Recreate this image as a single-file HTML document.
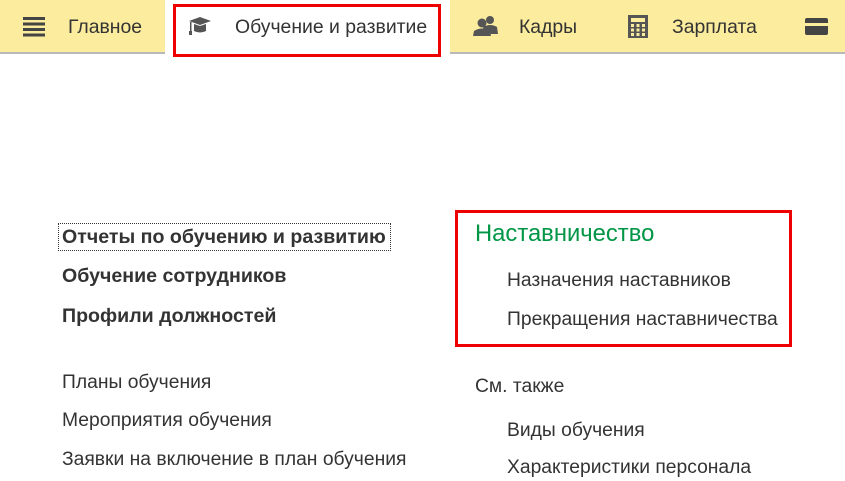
<!DOCTYPE html>
<html><head><meta charset="utf-8"><style>
body{margin:0;width:845px;height:481px;background:#fff;position:relative;overflow:hidden;font-family:"Liberation Sans",Arial,sans-serif;color:#333}
.bar{position:absolute;left:0;top:0;width:845px;height:52px;background:#fbec9e;border-bottom:2px solid #b9b9b9}
.t{position:absolute;top:16px;font-size:19.4px;color:#333;white-space:nowrap}
.a{position:absolute;white-space:nowrap}
.b{font-weight:bold;font-size:19.6px;color:#333}
.r{font-size:19.3px;color:#333}
</style></head><body>
<div class="bar"></div>
<div style="position:absolute;left:165px;top:0;width:285px;height:54px;background:#fff"></div>
<div style="position:absolute;left:173px;top:4px;width:262px;height:47px;border:3px solid #e00"></div>
<svg style="position:absolute;left:23px;top:17px" width="22" height="20"><g fill="#444"><rect x="0" y="0" width="22" height="3"/><rect x="0" y="5.5" width="22" height="3"/><rect x="0" y="11" width="22" height="3"/><rect x="0" y="16.5" width="22" height="3"/></g></svg>
<div class="t" style="left:68px">Главное</div>
<svg style="position:absolute;left:188px;top:16px" width="24" height="22"><g fill="#555"><path d="M1 5 L12 1 L23 5 L12 9 Z"/><path d="M6 8 L12 10 L18 8 L18 15 Q12 18 6 15 Z"/><rect x="2" y="6" width="1.5" height="10"/><rect x="1" y="15" width="3" height="4"/></g></svg>
<div class="t" style="left:235px">Обучение и развитие</div>
<svg style="position:absolute;left:473px;top:15px" width="26" height="22"><g fill="#555"><circle cx="17" cy="5" r="4"/><path d="M10 12 Q17 8 24 12 L25 19 L12 19 Z"/><circle cx="9" cy="8" r="4.5"/><path d="M0 21 L1 16 Q9 11 17 16 L18 21 Z"/></g></svg>
<div class="t" style="left:519px">Кадры</div>
<svg style="position:absolute;left:628px;top:15px" width="20" height="23"><rect x="0" y="0" width="20" height="23" fill="#555"/><rect x="3" y="3" width="14" height="4" fill="#fbec9e"/><g fill="#fbec9e"><rect x="3" y="9" width="3" height="3"/><rect x="8.5" y="9" width="3" height="3"/><rect x="14" y="9" width="3" height="3"/><rect x="3" y="13.5" width="3" height="3"/><rect x="8.5" y="13.5" width="3" height="3"/><rect x="14" y="13.5" width="3" height="3"/><rect x="3" y="18" width="3" height="3"/><rect x="8.5" y="18" width="3" height="3"/><rect x="14" y="18" width="3" height="3"/></g></svg>
<div class="t" style="left:672px">Зарплата</div>
<svg style="position:absolute;left:805px;top:18px" width="23" height="17"><rect x="0" y="0" width="23" height="17" rx="2" fill="#444"/><rect x="0" y="5" width="23" height="3" fill="#fbec9e"/></svg>

<div style="position:absolute;left:58px;top:223px;width:331px;height:26px;border:1px dotted #333"></div>
<div class="a b" style="left:62px;top:226px">Отчеты по обучению и развитию</div>
<div class="a b" style="left:62px;top:265px">Обучение сотрудников</div>
<div class="a b" style="left:62px;top:305px">Профили должностей</div>
<div class="a r" style="left:62px;top:372px">Планы обучения</div>
<div class="a r" style="left:62px;top:410px">Мероприятия обучения</div>
<div class="a r" style="left:62px;top:449px">Заявки на включение в план обучения</div>

<div style="position:absolute;left:455px;top:210px;width:331px;height:131px;border:3px solid #e00"></div>
<div class="a" style="left:475px;top:220px;font-size:23.8px;color:#009646">Наставничество</div>
<div class="a r" style="left:507px;top:270px">Назначения наставников</div>
<div class="a r" style="left:507px;top:309px">Прекращения наставничества</div>
<div class="a r" style="left:475px;top:376px">См. также</div>
<div class="a r" style="left:507px;top:420px">Виды обучения</div>
<div class="a r" style="left:507px;top:457px">Характеристики персонала</div>
</body></html>
